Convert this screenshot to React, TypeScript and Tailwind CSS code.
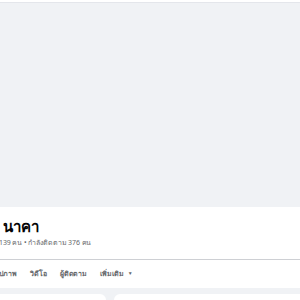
export default function App() {
  return (
    <div className="w-[300px] h-[300px] overflow-hidden bg-[#f0f2f5] flex flex-col" style={{ fontFamily: '"Noto Sans", "Liberation Sans", sans-serif' }}>
      <div className="h-[3px] bg-white border-b border-[#e4e6eb] shrink-0" />
      <div className="h-[204px] bg-[#f0f2f5] shrink-0" />
      <div className="bg-white h-[81px] shrink-0 flex flex-col">
        <div className="h-[52px] flex flex-col justify-end pb-[10px]">
          <div className="text-[15px] font-bold leading-[22px] text-[#050505] pl-[3px]">นาคา</div>
          <div className="text-[7px] leading-[12px] text-[#65676b] -ml-[1px] tracking-[-0.1px]">139 คน • กำลังติดตาม 376 คน</div>
        </div>
        <div className="h-px bg-[#ced0d4]" />
        <div className="flex-1 flex items-center gap-[13px] text-[7px] font-semibold text-[#65676b] -ml-[5px]">
          <span>รูปภาพ</span>
          <span>วิดีโอ</span>
          <span className="tracking-[-0.2px]">ผู้ติดตาม</span>
          <span className="flex items-center gap-[4px]">เพิ่มเติม<span className="text-[5px]">▼</span></span>
        </div>
      </div>
      <div className="h-[6px] shrink-0" />
      <div className="flex gap-[8px] flex-1">
        <div className="w-[106px] bg-white rounded-tr-[6px]" />
        <div className="flex-1 bg-white rounded-tl-[6px]" />
      </div>
    </div>
  );
}
